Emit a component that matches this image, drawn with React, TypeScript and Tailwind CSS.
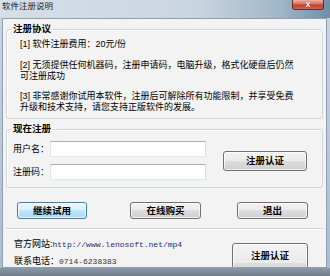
import React from "react";

const font = { fontFamily: "'Liberation Sans','Noto Sans CJK SC',sans-serif" };

function WinButton({ label, className = "", primary = false }: { label: string; className?: string; primary?: boolean }) {
  const base = primary
    ? "border-[#3c7fb1] bg-[linear-gradient(to_bottom,#eaf6fd_0%,#d9f0fc_50%,#bee6fd_50%,#a7d9f5_100%)]"
    : "border-[#707070] bg-[linear-gradient(to_bottom,#f2f2f2_0%,#ebebeb_50%,#dddddd_50%,#cfcfcf_100%)]";
  return (
    <div
      className={`flex shrink-0 justify-center rounded-[3px] border ${base} shadow-[inset_0_0_0_1px_rgba(255,255,255,0.7)] text-[9.5px] font-bold leading-none text-black ${className}`}
    >
      {label}
    </div>
  );
}

export default function App() {
  return (
    <div
      style={font}
      className="flex h-[276px] w-[330px] flex-col overflow-hidden bg-linear-to-b from-[#c9d6e2] to-[#a9bccd]"
    >
      {/* Title bar */}
      <div className="flex h-[18px] shrink-0 items-start justify-between bg-[linear-gradient(to_right,#d6dfe8_0%,#c9d5e0_60%,#9fb6c8_85%,#6f90a8_100%)]">
        <div className="pl-[2px] pt-[1px] text-[8.5px] leading-[11px] text-[#1e1e1e]">软件注册说明</div>
        <div className="mr-[6px] flex h-[10px] w-[32px] items-center justify-center rounded-b-[3px] border border-t-0 border-[#6e2c22] bg-[linear-gradient(to_bottom,#eab2a4_0%,#d8735e_45%,#c13f27_55%,#d7664b_100%)]">
          <span className="text-[9px] font-bold leading-none text-white [text-shadow:0_0_1px_#4a1a12]">x</span>
        </div>
      </div>

      {/* Client area */}
      <div className="ml-[2px] mr-[3px] flex h-[250px] shrink-0 flex-col overflow-hidden border border-[#8d9fb1] bg-[#f3f3f3] pl-[3px] pr-[3px] pt-[4px] text-black">
        {/* Group 1 */}
        <fieldset className="rounded-[3px] border border-[#d0d5d9] shadow-[inset_1px_1px_0_#ffffff]">
          <legend className="ml-[4px] px-[2px] text-[9.5px] font-bold leading-[12px]">注册协议</legend>
          <div className="pb-[5px] pl-[13px] pt-[4px]">
            <div className="whitespace-nowrap text-[9px] leading-[11px]">[1] 软件注册费用：20元/份</div>
            <div className="mt-[10px] whitespace-nowrap text-[9px] leading-[11px]">
              [2] 无须提供任何机器码，注册申请码，电脑升级，格式化硬盘后仍然
              <br />
              可注册成功
            </div>
            <div className="mt-[9px] whitespace-nowrap text-[9px] leading-[11px]">
              [3] 非常感谢你试用本软件，注册后可解除所有功能限制，并享受免费
              <br />
              升级和技术支持，请您支持正版软件的发展。
            </div>
          </div>
        </fieldset>

        {/* Group 2 */}
        <fieldset className="mt-[4px] rounded-[3px] border border-[#d0d5d9] shadow-[inset_1px_1px_0_#ffffff]">
          <legend className="ml-[4px] px-[2px] text-[9.5px] font-bold leading-[12px]">现在注册</legend>
          <div className="flex items-center pb-[7px] pl-[6px] pr-[15px] pt-[6px]">
            <div className="flex flex-col gap-[7px]">
              <div className="flex items-center">
                <span className="w-[37px] text-[9px] leading-[11px]">用户名：</span>
                <div className="h-[16px] w-[156px] border border-[#abadb3] border-b-[#e3e9ef] border-l-[#e2e3ea] border-r-[#dbdfe6] bg-white" />
              </div>
              <div className="flex items-center">
                <span className="w-[37px] text-[9px] leading-[11px]">注册码：</span>
                <div className="h-[16px] w-[156px] border border-[#abadb3] border-b-[#e3e9ef] border-l-[#e2e3ea] border-r-[#dbdfe6] bg-white" />
              </div>
            </div>
            <WinButton label="注册认证" className="ml-auto h-[20px] w-[84px] items-center" />
          </div>
        </fieldset>

        {/* Buttons row */}
        <div className="mt-[14px] flex items-center">
          <WinButton label="继续试用" primary className="ml-[11px] h-[17px] w-[70px] items-center" />
          <WinButton label="在线购买" className="ml-[43px] h-[17px] w-[71px] items-center" />
          <WinButton label="退出" className="ml-[36px] h-[17px] w-[71px] items-center" />
        </div>

        {/* Separator */}
        <div className="mt-[9px] h-[2px] shrink-0 border-t border-[#d5d5d5] bg-white" />

        {/* Bottom info */}
        <div className="flex items-start">
          <div className="mt-[9px] flex flex-col gap-[6px] pl-[8px]">
            <div className="flex items-center whitespace-nowrap text-[9px] leading-[11px]">
              <span>官方网站:</span>
              <span
                className="text-[8px] text-[#1f2a70]"
                style={{ fontFamily: "'Liberation Mono',monospace" }}
              >
                http://www.lenosoft.net/mp4
              </span>
            </div>
            <div className="flex items-center whitespace-nowrap text-[9px] leading-[11px]">
              <span>联系电话：</span>
              <span
                className="text-[8px] text-[#333333]"
                style={{ fontFamily: "'Liberation Mono',monospace" }}
              >
                0714-6238383
              </span>
            </div>
          </div>
          <WinButton label="注册认证" className="ml-auto mr-[15px] mt-[13px] h-[40px] w-[76px] items-start pt-[7px]" />
        </div>
      </div>

      {/* Bottom frame */}
      <div className="h-[8px] shrink-0 bg-linear-to-b from-[#8c99a6] to-[#6f7c89]" />
    </div>
  );
}
